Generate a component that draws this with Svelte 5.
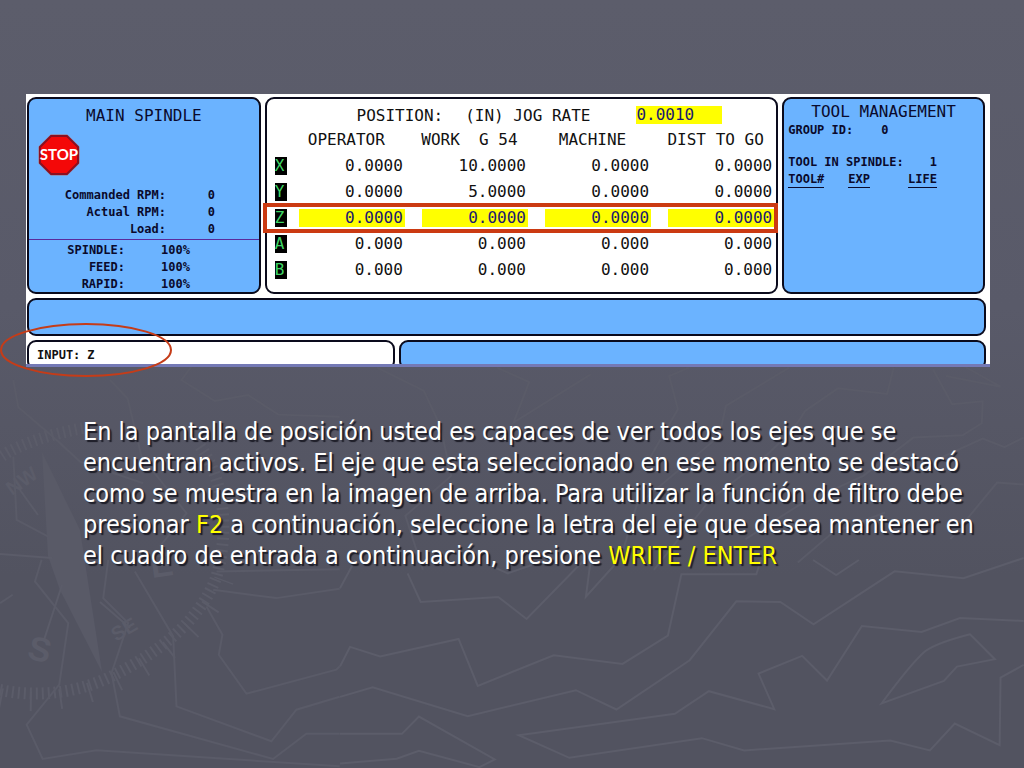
<script lang="ts">
  interface Axis {
    name: string;
    values: string[];
    selected?: boolean;
  }

  const columns = ['OPERATOR', 'WORK  G 54', 'MACHINE', 'DIST TO GO'];

  const axes: Axis[] = [
    { name: 'X', values: ['0.0000', '10.0000', '0.0000', '0.0000'] },
    { name: 'Y', values: ['0.0000', '5.0000', '0.0000', '0.0000'] },
    { name: 'Z', values: ['0.0000', '0.0000', '0.0000', '0.0000'], selected: true },
    { name: 'A', values: ['0.000', '0.000', '0.000', '0.000'] },
    { name: 'B', values: ['0.000', '0.000', '0.000', '0.000'] },
  ];

  const spindle = [
    { label: 'Commanded RPM:', value: '0' },
    { label: 'Actual RPM:', value: '0' },
    { label: 'Load:', value: '0' },
  ];

  const overrides = [
    { label: 'SPINDLE:', value: '100%' },
    { label: 'FEED:', value: '100%' },
    { label: 'RAPID:', value: '100%' },
  ];

  let command = $state('Z');
</script>

<main class="slide">
  <svg class="backdrop" viewBox="0 0 1024 768" preserveAspectRatio="xMidYMid slice" aria-hidden="true">
    <!-- compass -->
    <g class="compass">
      <path class="ticks" d="M0 690C40 698 80 692 112 676C160 652 200 620 216 578C230 530 224 480 200 446" />
      <path class="ticks" d="M2 456C20 444 50 434 84 428" />
      <path class="ticks long" d="M0 698C40 706 84 698 116 682C166 658 208 624 224 580" />
      <path class="needle" d="M42 452L80 530L102 672L60 590L48 556Z" />
      <path d="M62 585L44 640M100 602L130 628M0 554L52 558M20 490L38 515" />
      <text class="large" transform="translate(26 658) rotate(14)">S</text>
      <text transform="translate(116 642) rotate(-30)">SE</text>
      <text class="large" transform="translate(152 578) rotate(-8)">E</text>
      <text transform="translate(12 496) rotate(-35)">NW</text>
    </g>
    <!-- coastlines, lower right -->
    <g class="coast" transform="translate(340 560) scale(0.436 0.333)">
      <path d="M155 40L185 126L363 111L428 177L560 0M575 0L564 110L640 0" />
      <path d="M0 320L23 261L92 290L272 237L316 378L490 286L648 312L752 227L783 43L955 43L965 0" />
      <path d="M0 411L75 382L293 469L541 391L634 449L802 301L909 124L1010 126L1086 193L1272 34L1430 55L1568 -6" />
      <path d="M1568 183L1422 174L1334 216L1197 198L1117 362L1060 288L960 341L996 448L846 394L768 462L410 526L526 594L830 535L927 572L1262 542L1353 572L1410 491L1513 556L1515 353L1568 315" />
      <path d="M1242 431Q1310 310 1342 274Q1370 248 1445 223L1502 298L1415 320L1385 363Z" />
      <path d="M0 522L142 522L181 470L355 599L320 622L181 573L130 597L0 611" />
      <path d="M1085 0L1138 45L1190 0M350 20L385 40L440 15M0 85L35 0" />
    </g>
    <!-- coastlines, upper right -->
    <g class="coast faint" transform="translate(340 366) scale(0.436 0.333)">
      <path d="M85 5L192 74L230 180L255 330L150 450L190 612M360 5L434 48L398 170L575 25" />
      <path d="M800 5L755 30L775 130L700 300M1030 5L885 120L870 210L680 420L650 550" />
      <path d="M1270 5L1255 84L1142 67L1066 136Q1040 200 950 300L850 400L720 612M1360 10L1404 115L1474 106L1472 172L1428 208L1315 215L1200 330L1050 420L930 520" />
      <path d="M1390 30L1515 62L1430 0M1568 215L1524 244L1474 218L1320 310M1568 356L1507 350L1400 520M1050 590L1130 500L1250 440" />
    </g>
    <!-- coastlines, left -->
    <g class="coast faint" transform="translate(0 380) scale(0.333)">
      <path d="M40 0L55 82L170 180L240 245L430 310M330 0L383 55L425 230L560 400L480 500" />
      <path d="M575 -40L545 0L645 63L745 45L836 104L1020 110M1020 568L650 575M40 230L50 420L145 470" />
      <path d="M125 540L105 605L205 730L178 915L80 1035L128 1138L290 1112L1020 1160" />
      <path d="M325 540L310 655L385 730L335 880L360 1010L820 1138L920 1062L1020 1062" />
      <path d="M405 575L520 770L530 980L815 1085L890 990L1020 951M640 630L830 655L1020 627" />
      <path d="M620 680L668 765L657 825L740 942L1010 870L1020 860M0 670L38 645" />
    </g>
  </svg>

  <section class="screen" aria-label="Position display">
    <div class="screen-body">
      <div class="panels">
        <section class="panel spindle">
          <h2>MAIN SPINDLE</h2>
          <svg class="stop" viewBox="0 0 44 44" role="img" aria-label="STOP">
            <path d="M14 1H30L43 14V30L30 43H14L1 30V14Z" fill="#8d91b5" />
            <path d="M14 3H30L41 14V30L30 41H14L3 30V14Z" fill="#f40808" stroke="#8c1020" stroke-width="2" />
            <text x="22" y="27" text-anchor="middle">STOP</text>
          </svg>
          <dl class="readout">
            {#each spindle as item (item.label)}
              <dt>{item.label}</dt>
              <dd>{item.value}</dd>
            {/each}
          </dl>
          <dl class="readout overrides">
            {#each overrides as item (item.label)}
              <dt>{item.label}</dt>
              <dd>{item.value}</dd>
            {/each}
          </dl>
        </section>

        <section class="panel position">
          <h2 class="position-title">
            <span>POSITION:</span>
            <span>(IN) JOG RATE</span>
            <span class="jog-rate">0.0010</span>
          </h2>
          <table>
            <thead>
              <tr>
                <td class="axis-cell"></td>
                {#each columns as column (column)}
                  <th scope="col">{column}</th>
                {/each}
              </tr>
            </thead>
            <tbody>
              {#each axes as axis (axis.name)}
                <tr class:selected={axis.selected}>
                  <th class="axis-cell" scope="row"><span class="axis">{axis.name}</span></th>
                  {#each axis.values as value, i (i)}
                    <td><span class="value">{value}</span></td>
                  {/each}
                </tr>
              {/each}
            </tbody>
          </table>
        </section>

        <section class="panel tools">
          <h2>TOOL MANAGEMENT</h2>
          <p class="group-id"><span>GROUP ID:</span><span>0</span></p>
          <p class="in-spindle"><span>TOOL IN SPINDLE:</span><span>1</span></p>
          <p class="tool-columns"><span>TOOL#</span><span>EXP</span><span>LIFE</span></p>
        </section>
      </div>

      <div class="panel message-bar"></div>

      <div class="bottom">
        <div class="panel input-box">
          <label for="command">INPUT:</label>
          <input id="command" type="text" bind:value={command} />
        </div>
        <div class="panel status-box"></div>
      </div>
    </div>
    <svg class="callout" viewBox="0 0 172 54" aria-hidden="true">
      <ellipse cx="86" cy="27" rx="85" ry="26" />
    </svg>
  </section>

  <p class="description">
    En la pantalla de posición usted es capaces de ver todos los ejes que se encuentran activos. El
    eje que esta seleccionado en ese momento se destacó como se muestra en la imagen de arriba. Para
    utilizar la función de filtro debe presionar <em>F2</em> a continuación, seleccione la letra del
    eje que desea mantener en el cuadro de entrada a continuación, presione
    <em>WRITE / ENTER</em>
  </p>
</main>

<style>
  :global(body) {
    margin: 0;
    background: #525360;
  }

  .slide {
    position: relative;
    box-sizing: border-box;
    min-height: 100vh;
    padding: 94px 34px 24px 26px;
    overflow: hidden;
    background: linear-gradient(#5c5d6b 0%, #595a69 40%, #525360 75%, #525360 100%);
  }

  .backdrop {
    position: absolute;
    inset: 0;
    width: 100%;
    height: 100%;
  }

  .coast path {
    fill: none;
    stroke: #5c5d6a;
    stroke-width: 2;
    vector-effect: non-scaling-stroke;
  }

  .coast.faint path {
    stroke: #5a5b68;
  }

  .compass path {
    fill: none;
    stroke: #5b5c69;
    stroke-width: 2;
  }

  .compass .ticks {
    stroke-width: 12;
    stroke-dasharray: 2 4;
  }

  .compass .long {
    stroke-width: 20;
    stroke-dasharray: 2 28;
  }

  .compass .needle {
    fill: #595a67;
    stroke: none;
  }

  .compass text {
    font: bold 20px 'Liberation Sans', sans-serif;
    fill: #5b5c69;
  }

  .compass .large {
    font-size: 34px;
  }

  .screen {
    position: relative;
    background: #fff;
    border-bottom: 3px solid #7479b5;
    font-family: 'DejaVu Sans Mono', monospace;
    font-size: 12px;
    line-height: 16px;
    color: #0a0a2c;
  }

  .screen-body {
    display: flex;
    flex-direction: column;
    gap: 4px;
    max-height: 270px;
    padding: 3px 4px 0 1px;
    box-sizing: border-box;
    overflow: hidden;
  }

  .panels {
    display: grid;
    grid-template-columns: 234fr 514fr 203fr;
    gap: 4px;
    padding-right: 1px;
  }

  .panel {
    box-sizing: border-box;
    border: 2px solid #0a0a1c;
    border-radius: 9px;
    background: #6bb3ff;
  }

  h2 {
    margin: 0;
    font-size: 16px;
    font-weight: 400;
    line-height: 20px;
    text-align: center;
    white-space: pre;
  }

  .spindle {
    display: flex;
    flex-direction: column;
    padding-top: 7px;
  }

  .stop {
    width: 44px;
    height: 44px;
    margin: 7px 0 10px 8px;
  }

  .stop text {
    font: bold 15px Lato, 'Liberation Sans', sans-serif;
    fill: #fff;
  }

  .readout {
    display: grid;
    grid-template-columns: 137px 49px;
    row-gap: 1px;
    margin: 0;
    padding-bottom: 2px;
    font-weight: 700;
    text-align: right;
  }

  .readout dd {
    margin: 0;
  }

  .overrides {
    grid-template-columns: 96px 65px;
    padding-top: 2px;
    padding-bottom: 0;
    border-top: 1px solid #5a2a9c;
  }

  .position {
    padding: 7px 2px 4px 8px;
    background: #fff;
    color: #111;
  }

  .position-title {
    display: flex;
    justify-content: center;
    gap: 22px;
    margin-bottom: 1px;
    padding-left: 30px;
  }

  .jog-rate {
    width: 86px;
    height: 18px;
    margin-left: 24px;
    line-height: 18px;
    background: #ff0;
    color: #1a1a70;
    text-align: left;
  }

  table {
    width: 100%;
    table-layout: fixed;
    border-collapse: collapse;
    font-size: 16px;
    line-height: 18px;
  }

  th,
  td {
    height: 26px;
    box-sizing: border-box;
    padding: 0 0 0 17px;
    font-weight: 400;
    white-space: pre;
  }

  thead th {
    padding: 0 0 0 6px;
    text-align: center;
  }

  .axis-cell {
    width: 7px;
    padding: 0;
    text-align: left;
  }

  .axis {
    display: block;
    width: 12px;
    background: #000;
    color: #3fd565;
  }

  .value {
    display: block;
    padding-right: 2px;
    text-align: right;
  }

  .selected {
    position: relative;
  }

  .selected .axis-cell::after {
    content: '';
    position: absolute;
    inset: -2px -4px -2px -12px;
    border: 4px solid #cb3a12;
  }

  .selected .value {
    background: #ff0;
    color: #1a1a70;
  }

  .tools {
    padding: 3px 4px;
    font-weight: 700;
  }

  .tools p {
    display: flex;
    margin: 0;
  }

  .tools .group-id {
    gap: 28px;
  }

  .tools .in-spindle {
    gap: 26px;
    margin-top: 16px;
  }

  .tools .tool-columns {
    gap: 24px;
    margin-top: 1px;
  }

  .tool-columns span {
    border-bottom: 1px solid #0a0a2c;
  }

  .tool-columns span:last-child {
    margin-left: 14px;
  }

  .message-bar {
    flex: none;
    height: 38px;
  }

  .bottom {
    display: grid;
    grid-template-columns: 368fr 588fr;
    gap: 4px;
  }

  .bottom .panel {
    height: 30px;
  }

  .input-box {
    display: flex;
    align-items: center;
    gap: 7px;
    padding: 0 8px;
    background: #fff;
    color: #111;
    font-weight: 700;
  }

  .input-box input {
    flex: 1;
    min-width: 0;
    padding: 0;
    border: none;
    outline: none;
    background: none;
    color: inherit;
    font: inherit;
  }

  .callout {
    position: absolute;
    left: -26px;
    bottom: -13px;
    width: 172px;
    height: 54px;
    pointer-events: none;
  }

  .callout ellipse {
    fill: none;
    stroke: #c53c18;
    stroke-width: 2;
  }

  .description {
    position: relative;
    margin: 49px 0 0 57px;
    font-family: 'DejaVu Sans Condensed', 'Noto Sans', sans-serif;
    font-size: 25px;
    line-height: 31px;
    color: #fff;
    text-shadow: 2px 2px 1px #1c1c26;
  }

  .description em {
    font-style: normal;
    color: #ff0;
  }
</style>
